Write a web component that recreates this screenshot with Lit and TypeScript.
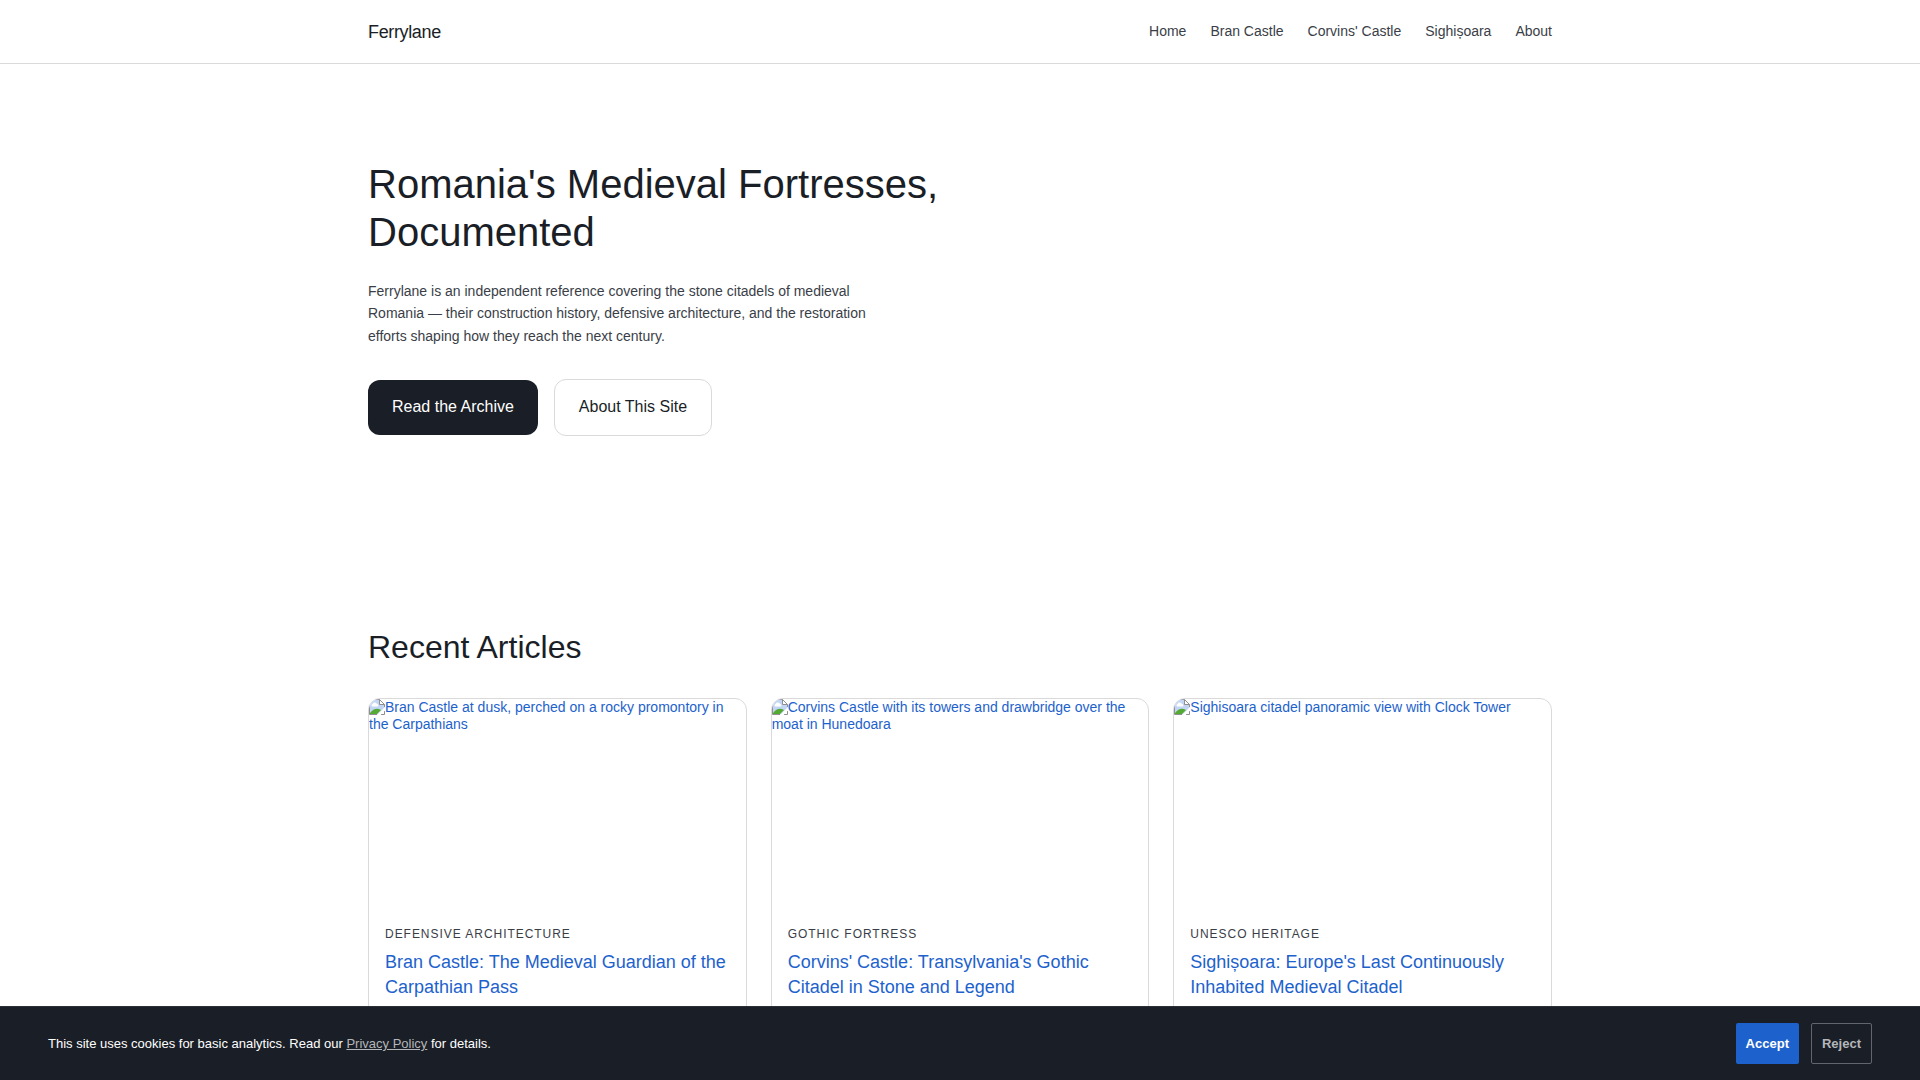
import { LitElement, html, css, svg } from "lit";
import { customElement } from "lit/decorators.js";

interface Article {
  alt: string;
  category: string;
  title: string;
}

const NAV = ["Home", "Bran Castle", "Corvins' Castle", "Sighișoara", "About"];

const ARTICLES: Article[] = [
  {
    alt: "Bran Castle at dusk, perched on a rocky promontory in the Carpathians",
    category: "Defensive Architecture",
    title: "Bran Castle: The Medieval Guardian of the Carpathian Pass",
  },
  {
    alt: "Corvins Castle with its towers and drawbridge over the moat in Hunedoara",
    category: "Gothic Fortress",
    title: "Corvins' Castle: Transylvania's Gothic Citadel in Stone and Legend",
  },
  {
    alt: "Sighisoara citadel panoramic view with Clock Tower",
    category: "UNESCO Heritage",
    title: "Sighișoara: Europe's Last Continuously Inhabited Medieval Citadel",
  },
];

// Placeholder glyph shown ahead of a picture's alternative text.
const missingPicture = html`<svg class="missing" width="16" height="16" viewBox="0 0 16 16" aria-hidden="true">
  ${svg`
    <path d="M0.5 0.5H10.5L15.5 5.5V8.5L8.5 15.5H0.5Z" fill="#c3d5f5" />
    <path d="M3 7.5a1.5 1.5 0 0 1 0.5-2.5a2.5 2.5 0 0 1 4.5 0a1.5 1.5 0 0 1 1 2.5Z" fill="#fff" />
    <path d="M1 15V14Q6 7.5 12 11L8 15Z" fill="#55aa33" />
    <path d="M10.5 0.5V5.5H15.5Z" fill="#fff" />
    <path d="M8 15.5H0.5V0.5H10.5L15.5 5.5V8M10.5 0.5V5.5H15.5M15.5 11V15.5H12" fill="none" stroke="#8f8f8f" />
    <path d="M16 8.5L8.5 16H11.5L16 11.5Z" fill="#fff" />
  `}
</svg>`;

@customElement("app-root")
export class AppRoot extends LitElement {
  static styles = css`
    :host {
      display: block;
      height: 100vh;
      overflow: hidden;
      background: #fff;
      color: #1a1e26;
      font-family: "Liberation Sans", Arial, sans-serif;
      font-size: 14px;
    }
    * { box-sizing: border-box; }
    h1, h2, h3, p { margin: 0; font-weight: 400; }
    a { color: #1d62cc; text-decoration: none; }
    .container { max-width: 1184px; margin: 0 auto; }
    .header { border-bottom: 1px solid #dadada; }
    .bar { display: flex; align-items: flex-start; justify-content: space-between; padding: 16px 0 15px; }
    .brand { color: #1a1e26; font-size: 18px; line-height: 32px; letter-spacing: -0.02em; }
    .nav { display: flex; gap: 24px; line-height: 30px; }
    .nav a { color: #3a3e47; }
    .hero { padding: 96px 0; }
    .hero h1 { max-width: 640px; font-size: 40px; line-height: 48px; }
    .lead { max-width: 520px; margin-top: 24px; color: #3a3e47; line-height: 1.6; }
    .actions { display: flex; align-items: center; gap: 16px; margin-top: 32px; }
    .button { padding: 16px 24px; border-radius: 12px; font-size: 16px; line-height: 1.4; }
    .primary { background: #1a1e26; color: #fff; }
    .secondary { border: 1px solid #dadada; color: #1a1e26; }
    .articles { padding: 96px 0; }
    .articles h2 { font-size: 32px; line-height: 1.2; }
    .grid { display: grid; grid-template-columns: repeat(3, 1fr); gap: 24px; margin-top: 32px; }
    .card { display: block; overflow: hidden; border: 1px solid #dadada; border-radius: 12px; }
    .picture { display: block; height: 211px; line-height: 17px; }
    .missing { vertical-align: top; }
    .body { padding: 16px; }
    .category { color: #3a3e47; font-size: 12px; line-height: 16px; letter-spacing: 0.08em; text-transform: uppercase; }
    .card h3 { margin-top: 8px; font-size: 18px; line-height: 25px; }
    .cookies {
      position: fixed; right: 0; bottom: 0; left: 0;
      display: flex; align-items: center; justify-content: space-between;
      padding: 16px 48px; border-top: 1px solid #2b2f38;
      background: #1a1e26; color: #fff; font-size: 13px;
    }
    .cookies a { color: #b4b6ba; text-decoration: underline; }
    .choices { display: flex; gap: 12px; }
    button { padding: 12px 10px; border: 0; border-radius: 2px; background: #1d62cc; color: #fff; font: bold 13px/15px "Liberation Sans", Arial, sans-serif; }
    .reject { border: 1px solid #62656c; background: none; color: #b4b6ba; }
  `;

  render() {
    return html`
      <header class="header">
        <div class="container bar">
          <a class="brand" href="#">Ferrylane</a>
          <nav class="nav">${NAV.map((n) => html`<a href="#">${n}</a>`)}</nav>
        </div>
      </header>
      <main class="container">
        <section class="hero">
          <h1>Romania's Medieval Fortresses, Documented</h1>
          <p class="lead">Ferrylane is an independent reference covering the stone citadels of medieval Romania — their construction history, defensive architecture, and the restoration efforts shaping how they reach the next century.</p>
          <div class="actions">
            <a class="button primary" href="#articles">Read the Archive</a>
            <a class="button secondary" href="#about">About This Site</a>
          </div>
        </section>
        <section class="articles" id="articles">
          <h2>Recent Articles</h2>
          <div class="grid">
            ${ARTICLES.map((a) => html`<a class="card" href="#">
              <span class="picture">${missingPicture}${a.alt}</span>
              <div class="body"><p class="category">${a.category}</p><h3>${a.title}</h3></div>
            </a>`)}
          </div>
        </section>
      </main>
      <aside class="cookies" aria-label="Cookie notice">
        <p>This site uses cookies for basic analytics. Read our <a href="#">Privacy Policy</a> for details.</p>
        <div class="choices"><button>Accept</button><button class="reject">Reject</button></div>
      </aside>
    `;
  }
}
